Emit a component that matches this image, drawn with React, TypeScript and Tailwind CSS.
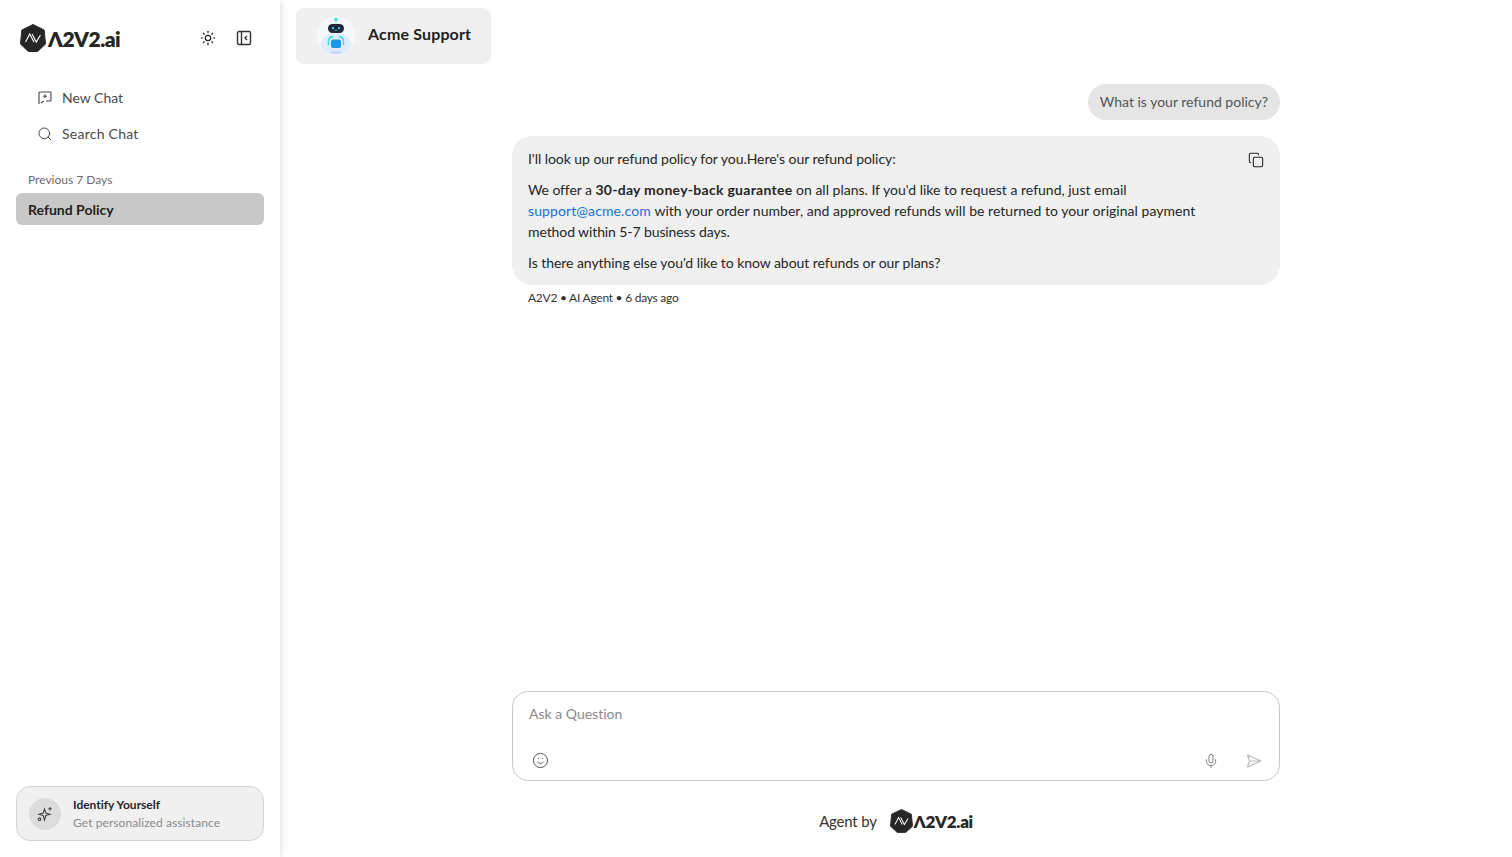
import { Copy, Mic, Search, Smile, Sun } from "lucide-react"

function Logo({ small }: { small?: boolean }) {
  return (
    <div className="flex items-center">
      <svg
        viewBox="0 0 28 28"
        preserveAspectRatio="none"
        className={small ? "h-[24px] w-[23px]" : "h-[28px] w-[26px]"}
      >
        <path
          d="M14 0.5 L26 6 L27.5 20 L19 27.5 L9 27.5 L0.5 20 L2 6 Z"
          fill="#262626"
          stroke="#262626"
          strokeLinejoin="round"
        />
        <path d="M6 18 L10.5 10 L15 18 M13 10 L17.5 18 L22 11" fill="none" stroke="#fff" strokeWidth="1.2" />
      </svg>
      <span
        className={
          small
            ? "ml-[1px] text-[17px] leading-none font-extrabold tracking-[-0.3px] text-[#262626]"
            : "ml-[2px] text-[21px] leading-none font-extrabold tracking-[-0.5px] text-[#262626]"
        }
      >
        Λ2V2.ai
      </span>
    </div>
  )
}

function RobotAvatar() {
  return (
    <svg viewBox="0 0 40 40" className="h-[40px] w-[40px]">
      <circle cx="20" cy="20" r="19.5" fill="#f6f7f9" />
      <ellipse cx="20" cy="28" rx="15.5" ry="10.5" fill="#e0ecfb" />
      <circle cx="20" cy="3.5" r="1.7" fill="#2fe3da" />
      <rect x="19.4" y="5" width="1.2" height="3" fill="#9af0ea" />
      <rect x="12" y="8" width="16" height="9" rx="4.5" fill="#23263a" />
      <circle cx="17" cy="12.2" r="1.1" fill="#36e0d6" />
      <circle cx="23" cy="12.2" r="1.1" fill="#36e0d6" />
      <path d="M18.5 14.4 h3" stroke="#36e0d6" strokeWidth="0.7" />
      <path d="M12.5 29 V25.5 Q12.5 21 17 20.5 M27.5 29 V25.5 Q27.5 21 23 20.5" fill="none" stroke="#2fe3da" strokeWidth="1.5" />
      <rect x="15" y="23.5" width="10" height="8.5" rx="2" fill="#1a97e8" />
      <ellipse cx="20" cy="36.5" rx="6" ry="1" fill="#c3cdf0" />
    </svg>
  )
}

export default function App() {
  return (
    <div className="flex h-[857px] w-full overflow-hidden bg-white font-['Lato','Liberation_Sans',sans-serif] text-[14px] text-[#262626] [font-variant-ligatures:none]">
      <aside className="flex w-[280px] shrink-0 flex-col bg-white px-4 shadow-[2px_0_6px_rgba(0,0,0,0.1)]">
        <div className="mt-6 flex h-[28px] items-center justify-between pr-[12px] pl-1">
          <Logo />
          <div className="flex items-center gap-5">
            <Sun className="h-4 w-4 text-[#262626]" strokeWidth={1.8} />
            <svg viewBox="0 0 16 16" className="h-4 w-4" fill="none" stroke="#333" strokeWidth="1.4">
              <rect x="1.5" y="1.5" width="13" height="13" rx="1.5" />
              <path d="M5.5 1.5 V14.5" />
              <path d="M11 6 L9 8 L11 10" />
            </svg>
          </div>
        </div>

        <nav className="mt-[28px] flex flex-col pl-[21px] text-[#4a4a4a]">
          <div className="flex h-9 items-center gap-[9px]">
            <svg viewBox="-1 -1 16 16" className="h-4 w-4" fill="none" stroke="#444" strokeWidth="1.1">
              <path d="M1 13 V2 a1 1 0 0 1 1 -1 H12 a1 1 0 0 1 1 1 V9 a1 1 0 0 1 -1 1 H8" />
              <path d="M3 12 L5 10.5 H6" />
              <path d="M7 3.5 V7 M5.2 5.2 H8.8" />
            </svg>
            <span className="pb-[2px]">New Chat</span>
          </div>
          <div className="flex h-9 items-center gap-[9px]">
            <Search className="h-4 w-4" strokeWidth={1.5} />
            <span className="pb-[2px] tracking-[0.25px]">Search Chat</span>
          </div>
        </nav>

        <div className="mt-[20px] px-3 text-[12px] leading-[16px] text-[#6b6b6b]">Previous 7 Days</div>
        <div className="mt-[5px] flex h-[32px] items-center rounded-[6px] bg-[#c8c8c8] px-3 font-bold text-[#222]">
          Refund Policy
        </div>

        <div className="mt-auto mb-4 flex h-[55px] items-center gap-3 rounded-[14px] border border-[#d4d4d4] bg-[#f0f0f0] px-3">
          <div className="flex h-8 w-8 items-center justify-center rounded-full bg-[#dcdcdc]">
            <svg viewBox="0 0 16 16" className="h-4 w-4" fill="none" stroke="#444" strokeWidth="1.1">
              <path d="M7.5 3 L8.8 7 L13 8.2 L8.8 9.5 L7.5 14 L6.2 9.5 L2 8.2 L6.2 7 Z" />
              <path d="M13 1 V4.5 M11.2 2.8 H14.8" />
              <circle cx="2.5" cy="13.2" r="1.3" />
            </svg>
          </div>
          <div className="flex flex-col">
            <span className="text-[12px] leading-[18px] font-bold text-[#262626]">Identify Yourself</span>
            <span className="text-[12px] leading-[18px] tracking-[0.08px] text-[#8a8a8a]">
              Get personalized assistance
            </span>
          </div>
        </div>
      </aside>

      <main className="flex min-w-0 flex-1 flex-col">
        <header className="px-4 pt-2">
          <div className="flex h-14 w-[195px] items-center gap-3 rounded-lg bg-[#f0f0f0] pl-5">
            <RobotAvatar />
            <span className="pb-1 text-[16px] font-bold tracking-[0.15px] text-[#1f1f1f]">Acme Support</span>
          </div>
        </header>

        <section className="mx-auto flex w-[768px] flex-1 flex-col pt-5">
          <div className="flex justify-end">
            <div className="flex h-9 items-center rounded-[18px] bg-[#e5e5e5] px-3 pb-[2px] text-[#555]">
              What is your refund policy?
            </div>
          </div>
          <div className="relative mt-4 rounded-[20px] bg-[#f0f0f0] px-4 py-3 leading-[21px] text-[#262626]">
            <Copy className="absolute top-4 right-4 h-4 w-4 text-[#222]" strokeWidth={1.6} />
            <p className="tracking-[-0.05px]">I'll look up our refund policy for you.Here's our refund policy:</p>
            <p className="mt-[10px] max-w-[690px]">
              <span className="tracking-[-0.1px]">We offer a</span>{" "}
              <strong className="font-bold tracking-[0.28px]">30-day money-back guarantee</strong> on all
              plans. If you'd like to request a refund, just email{" "}
              <span className="tracking-[0.1px] text-[#1a6fd8]">support@acme.com</span>{" "}
              <span className="tracking-[0.03px]">with your order number, and approved refunds will be returned to your original payment</span>{" "}
              <span className="tracking-[-0.1px]">method within 5-7 business days.</span>
            </p>
            <p className="mt-[10px] tracking-[-0.05px]">
              Is there anything else you'd like to know about refunds or our plans?
            </p>
          </div>
          <div className="mt-[5px] px-4 text-[12px] leading-[16px] tracking-[-0.25px] text-[#333]">
            A2V2 • AI Agent • 6 days ago
          </div>
        </section>

        <div className="mx-auto flex h-[90px] w-[768px] flex-col justify-between rounded-[16px] border border-[#c8c8c8] px-4 pt-[12px] pb-[11px]">
          <span className="leading-[20px] text-[#8a8a8a]">Ask a Question</span>
          <div className="flex items-center justify-between">
            <Smile className="ml-[3px] h-[17px] w-[17px] text-[#555]" strokeWidth={1.4} />
            <div className="flex items-center gap-[27px] pr-[1px]">
              <Mic className="h-4 w-4 text-[#777]" strokeWidth={1.4} />
              <svg viewBox="0 0 16 16" className="h-4 w-4" fill="none" stroke="#bdbdbd" strokeWidth="1.2" strokeLinejoin="round">
                <path d="M1.5 2 L15 8 L1.5 14 L3.5 8 Z M3.5 8 H15" />
              </svg>
            </div>
          </div>
        </div>

        <footer className="flex h-[76px] items-center justify-center gap-[13px] pt-1 text-[15px] tracking-[-0.2px] text-[#333]">
          <span>Agent by</span>
          <Logo small />
        </footer>
      </main>
    </div>
  )
}
